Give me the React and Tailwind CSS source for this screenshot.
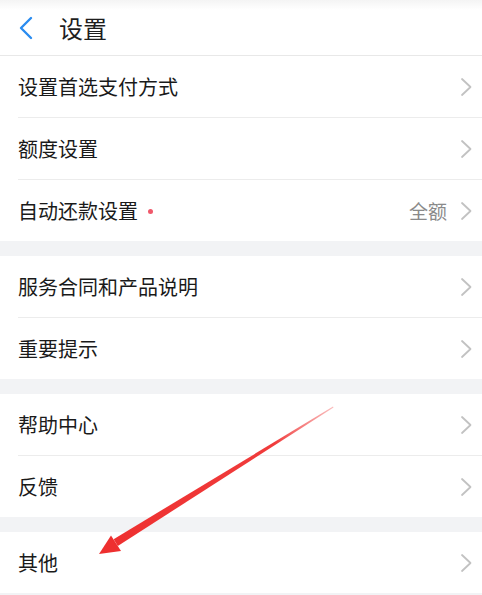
import { Fragment } from 'react'

const FONT = { fontFamily: '"Noto Sans CJK SC", "Noto Sans", sans-serif' }

const GROUPS = [
  [
    { label: '设置首选支付方式' },
    { label: '额度设置' },
    { label: '自动还款设置', dot: true, value: '全额' },
  ],
  [{ label: '服务合同和产品说明' }, { label: '重要提示' }],
  [{ label: '帮助中心' }, { label: '反馈' }],
  [{ label: '其他' }],
]

function Chevron() {
  return (
    <svg width="14" height="20" viewBox="0 0 14 20" fill="none" className="shrink-0">
      <path d="M3 2 L11.5 10 L3 18" stroke="#c2c2c2" strokeWidth="1.8" strokeLinecap="round" strokeLinejoin="round" />
    </svg>
  )
}

function Row({ item }) {
  return (
    <div className="h-[61px] flex items-center pl-[18px] pr-[9px]">
      <span className="text-[20px] text-[#1a1a1a] leading-none">{item.label}</span>
      {item.dot && <span className="ml-[10px] mt-[2px] w-[5px] h-[5px] rounded-full bg-[#f0586a]" />}
      <div className="flex-1" />
      {item.value && <span className="text-[19px] text-[#8a8a8a] mr-[12px] leading-none">{item.value}</span>}
      <Chevron />
    </div>
  )
}

export default function App() {
  return (
    <div className="relative w-[482px] h-[595px] overflow-hidden bg-[#f2f3f5]" style={FONT}>
      <div className="h-[56px] flex items-center border-b border-[#e8e8e8] bg-gradient-to-b from-[#f4f4f4] to-white to-[18%]">
        <svg width="16" height="24" viewBox="0 0 16 24" className="ml-[18px]" fill="none">
          <path d="M13 2 L3 12 L13 22" stroke="#2a8cf0" strokeWidth="2.4" strokeLinecap="round" strokeLinejoin="round" />
        </svg>
        <span className="ml-[25px] text-[24px] text-[#1e1e1e] leading-none">设置</span>
      </div>
      {GROUPS.map((group, gi) => (
        <div key={gi} className={gi > 0 ? 'mt-[15px] bg-white' : 'bg-white'}>
          {group.map((item, i) => (
            <Fragment key={item.label}>
              {i > 0 && <div className="ml-[18px] h-px bg-[#ececec]" />}
              <Row item={item} />
            </Fragment>
          ))}
        </div>
      ))}
      {/* annotation arrow */}
      <svg className="absolute left-0 top-0" width="482" height="595" viewBox="0 0 482 595">
        <defs>
          <linearGradient id="ar" x1="333" y1="407" x2="100" y2="554" gradientUnits="userSpaceOnUse">
            <stop offset="0" stopColor="#f25a5a" stopOpacity="0.4" />
            <stop offset="0.25" stopColor="#f03c3c" />
            <stop offset="1" stopColor="#ee2f2f" />
          </linearGradient>
        </defs>
        <polygon points="333,406.6 333.5,407.4 117.8,546 113.6,539.2" fill="url(#ar)" />
        <polygon points="99,554 111,535.5 121,551" fill="#ee2f2f" />
      </svg>
    </div>
  )
}
